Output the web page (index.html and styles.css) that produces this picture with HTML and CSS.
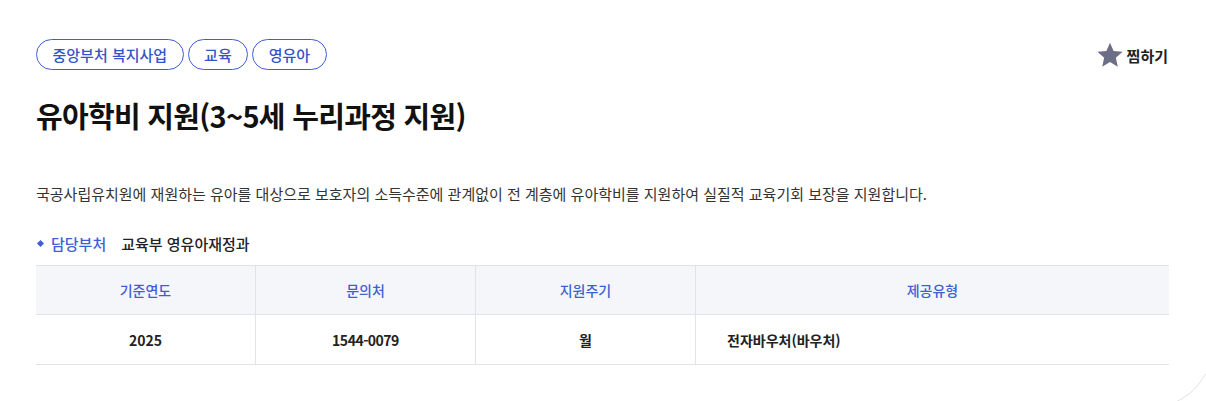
FILE: index.html
```html
<!DOCTYPE html>
<html lang="ko">
<head>
<meta charset="utf-8">
<link rel="stylesheet" href="styles.css">
</head>
<body>
<div class="page">
  <div class="top">
    <div class="tags">
      <span class="tag">중앙부처 복지사업</span>
      <span class="tag">교육</span>
      <span class="tag">영유아</span>
    </div>
    <button class="fav">
      <svg class="star" width="28" height="28" viewBox="0 0 24 24"><path d="M12 1.5l3.1 7.1 7.7.7-5.8 5.1 1.7 7.6L12 18l-6.7 4 1.7-7.6-5.8-5.1 7.7-.7z" fill="#6b6e85"/></svg>
      <span>찜하기</span>
    </button>
  </div>
  <h1 class="title">유아학비 지원(3~5세 누리과정 지원)</h1>
  <p class="desc">국공사립유치원에 재원하는 유아를 대상으로 보호자의 소득수준에 관계없이 전 계층에 유아학비를 지원하여 실질적 교육기회 보장을 지원합니다.</p>
  <div class="dept">
    <span class="dot"></span>
    <span class="dept-label">담당부처</span>
    <span class="dept-value">교육부 영유아재정과</span>
  </div>
  <table class="info">
    <thead>
      <tr><th>기준연도</th><th>문의처</th><th>지원주기</th><th>제공유형</th></tr>
    </thead>
    <tbody>
      <tr><td>2025</td><td class="num">1544-0079</td><td>월</td><td class="left">전자바우처(바우처)</td></tr>
    </tbody>
  </table>
</div>
<div class="deco"></div>
</body>
</html>
```
FILE: styles.css
```css
html, body {
  margin: 0;
  padding: 0;
  background: #fff;
  overflow: hidden;
}
body {
  width: 1206px;
  height: 401px;
  position: relative;
  font-family: "Noto Sans CJK KR", "Noto Sans", sans-serif;
  color: #222;
}
.page {
  padding: 39px 37px 0 36px;
}
.top {
  display: flex;
  justify-content: space-between;
  align-items: center;
  height: 31px;
}
.tags {
  display: flex;
  gap: 4px;
}
.tag {
  display: inline-flex;
  align-items: center;
  height: 31px;
  box-sizing: border-box;
  padding: 0 15.5px;
  border: 1px solid #3d5fd6;
  border-radius: 16px;
  color: #3553c9;
  font-size: 15px;
  font-weight: 500;
}
.fav {
  display: flex;
  align-items: center;
  gap: 3px;
  background: none;
  border: 0;
  padding: 0;
  font-family: inherit;
  font-size: 15px;
  font-weight: 700;
  color: #222;
  margin-top: 1px;
  margin-right: 1px;
}
.title {
  margin: 25px 0 0;
  font-size: 29px;
  font-weight: 700;
  letter-spacing: -0.7px;
  line-height: 40px;
  color: #111;
}
.desc {
  margin: 48px 0 0;
  font-size: 15px;
  line-height: 22px;
  color: #333;
}
.dept {
  display: flex;
  align-items: center;
  margin-top: 27px;
  height: 22px;
  font-size: 15px;
}
.dot {
  width: 5px;
  height: 5px;
  background: #3d5fd6;
  transform: rotate(45deg);
  margin: 0 8px 0 2px;
}
.dept-label {
  color: #3d5fd6;
  font-weight: 500;
  margin-right: 15px;
}
.dept-value {
  color: #222;
  font-weight: 500;
}
.info {
  margin-top: 11px;
  width: 1133px;
  border-collapse: collapse;
  table-layout: fixed;
  font-size: 14px;
}
.info th, .info td {
  padding: 0;
  text-align: center;
  border-top: 1px solid #e1e3e8;
  border-bottom: 1px solid #e1e3e8;
}
.info th {
  height: 48px;
}
.info td {
  height: 49px;
}
.info th + th, .info td + td {
  border-left: 1px solid #e1e3e8;
}
.info th:nth-child(-n+3), .info td:nth-child(-n+3) {
  width: 219px;
}
.info th {
  background: #f5f6fa;
  color: #3d5fd6;
  font-weight: 500;
}
.info td {
  color: #222;
  font-weight: 700;
}
.info td.num {
  letter-spacing: -0.5px;
}
.info td.left {
  text-align: left;
  padding-left: 31px;
}
.deco {
  position: absolute;
  left: 1087px;
  top: 282px;
  width: 124px;
  height: 124px;
  border: 1px solid #e3e3e3;
  border-radius: 50%;
  clip-path: inset(92px 0 0 90px);
}
```
